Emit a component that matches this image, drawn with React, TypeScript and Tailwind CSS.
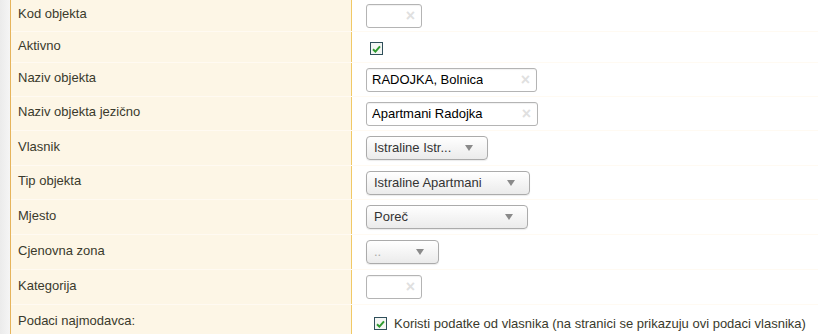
import React from 'react';

type Field =
  | { kind: 'text'; value: string; width: string }
  | { kind: 'check' }
  | { kind: 'select'; value: string; width: string; muted?: boolean }
  | { kind: 'owner' };

interface Row {
  label: string;
  height: string;
  field: Field;
}

const rows: Row[] = [
  { label: 'Kod objekta', height: 'h-[31px]', field: { kind: 'text', value: '', width: 'w-[56px]' } },
  { label: 'Aktivno', height: 'h-[30px]', field: { kind: 'check' } },
  { label: 'Naziv objekta', height: 'h-[33px]', field: { kind: 'text', value: 'RADOJKA, Bolnica', width: 'w-[171px]' } },
  { label: 'Naziv objekta jezično', height: 'h-[33px]', field: { kind: 'text', value: 'Apartmani Radojka', width: 'w-[172px]' } },
  { label: 'Vlasnik', height: 'h-[34px]', field: { kind: 'select', value: 'Istraline Istr...', width: 'w-[122px]' } },
  { label: 'Tip objekta', height: 'h-[33px]', field: { kind: 'select', value: 'Istraline Apartmani', width: 'w-[164px]' } },
  { label: 'Mjesto', height: 'h-[34px]', field: { kind: 'select', value: 'Poreč', width: 'w-[162px]' } },
  { label: 'Cjenovna zona', height: 'h-[34px]', field: { kind: 'select', value: '..', width: 'w-[73px]', muted: true } },
  { label: 'Kategorija', height: 'h-[34px]', field: { kind: 'text', value: '', width: 'w-[56px]' } },
  { label: 'Podaci najmodavca:', height: 'h-[35px]', field: { kind: 'owner' } },
];

function CheckBox() {
  return (
    <span className="flex items-center justify-center w-[13px] h-[13px] border border-[#2f4f5a] bg-[#f4f6f4]">
      <svg width="9" height="8" viewBox="0 0 9 8">
        <path d="M1 4.2 L3.4 6.6 L8 1.4" fill="none" stroke="#2f9b2f" strokeWidth="2" />
      </svg>
    </span>
  );
}

function TextInput({ value, width }: { value: string; width: string }) {
  return (
    <div
      className={`${width} h-[24px] flex items-center justify-between pl-[5px] pr-[6px] bg-white border border-[#b4b4b4] rounded-[3px] shadow-[inset_0_1px_1px_rgba(0,0,0,0.06)]`}
    >
      <span className="text-[13px] text-black truncate">{value}</span>
      <span className="text-[16px] leading-none font-bold text-[#e0e0e0]">×</span>
    </div>
  );
}

function Select({ value, width, muted }: { value: string; width: string; muted?: boolean }) {
  return (
    <div
      className={`${width} h-[24px] flex items-center justify-between pl-[7px] pr-[14px] border border-[#ababab] rounded-[4px] bg-gradient-to-b from-white to-[#ebebeb] shadow-[0_1px_1px_rgba(0,0,0,0.08)]`}
    >
      <span className={`text-[13px] ${muted ? 'text-[#aaaaaa]' : 'text-[#333333]'}`}>{value}</span>
      <svg width="8" height="6" viewBox="0 0 8 6">
        <path d="M0 0 H8 L4 6 Z" fill="#8a8a8a" />
      </svg>
    </div>
  );
}

function FieldView({ field }: { field: Field }) {
  if (field.kind === 'text') return <TextInput value={field.value} width={field.width} />;
  if (field.kind === 'select') return <Select value={field.value} width={field.width} muted={field.muted} />;
  if (field.kind === 'check')
    return (
      <div className="pl-[4px] pt-[3px]">
        <CheckBox />
      </div>
    );
  return (
    <div className="flex items-center gap-[7px] pl-[8px] pt-[2px]">
      <CheckBox />
      <span className="text-[13px] text-[#3a3a2c] whitespace-nowrap">
        Koristi podatke od vlasnika (na stranici se prikazuju ovi podaci vlasnika)
      </span>
    </div>
  );
}

export default function App() {
  return (
    <div
      className="w-[818px] h-[334px] overflow-hidden flex bg-white"
      style={{ fontFamily: '"Liberation Sans", Arial, sans-serif' }}
    >
      {/* Grey gutter */}
      <div className="w-[10px] flex-shrink-0 bg-gradient-to-r from-[#ebebeb] to-[#f5f5f5]" />

      <div className="flex-1 flex flex-col gap-[1px] border-l border-[#e6b45c] bg-[#fffaf2]">
        {rows.map((row) => (
          <div key={row.label} className={`flex ${row.height} flex-shrink-0`}>
            <div className="w-[341px] flex-shrink-0 flex items-center pl-[7px] pb-[3px] bg-[#fdf6e6] border-r border-[#f1c966]">
              <span className="text-[13px] text-[#3a3a2c]">{row.label}</span>
            </div>
            <div className="flex-1 flex items-center pl-[14px] bg-white">
              <FieldView field={row.field} />
            </div>
          </div>
        ))}
      </div>
    </div>
  );
}
